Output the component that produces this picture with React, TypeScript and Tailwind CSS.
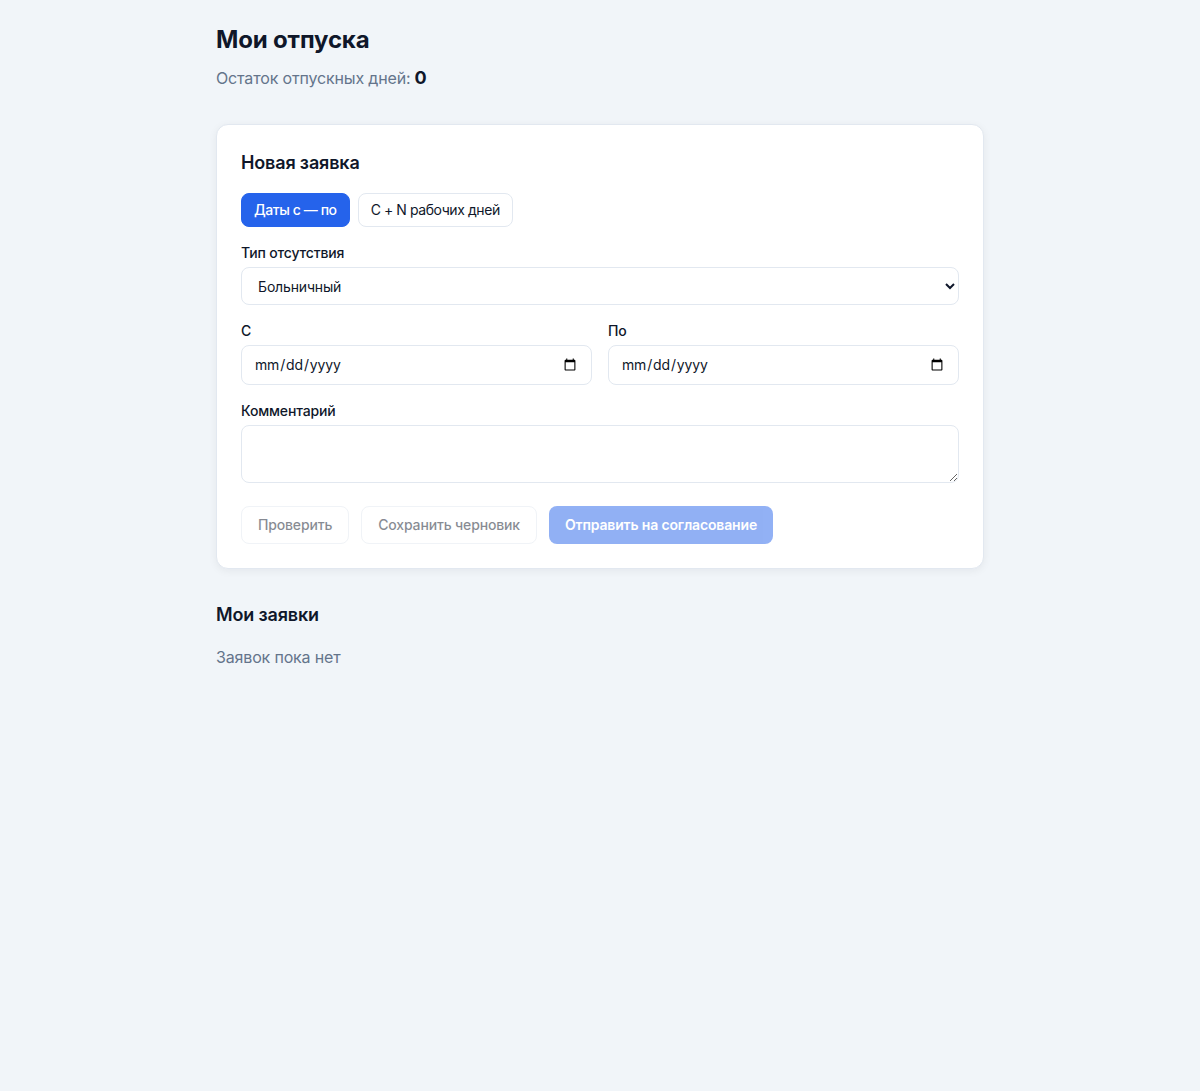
import { useState } from "react";

export default function App() {
  const [mode, setMode] = useState<"range" | "days">("range");

  return (
    <div className="min-h-screen bg-[#f1f5f9] font-['Inter',sans-serif] tracking-[-0.01em] text-[#0f172a]">
      <div className="mx-auto max-w-3xl py-6">
        <h1 className="text-2xl font-bold">Мои отпуска</h1>
        <p className="mt-2 flex items-baseline gap-1 text-base text-[#64748b]">
          Остаток отпускных дней:
          <span className="text-lg font-bold text-[#0f172a]">0</span>
        </p>

        <div className="mt-8 rounded-xl border border-[#e2e8f0] bg-white p-6 shadow-[0_2px_8px_rgba(15,23,42,0.06)]">
          <h2 className="text-lg font-semibold">Новая заявка</h2>

          <div className="mt-4 flex gap-2">
            <button
              onClick={() => setMode("range")}
              className={`h-[34px] rounded-lg border px-3 text-sm tracking-[-0.03em] ${
                mode === "range"
                  ? "border-[#2563eb] bg-[#2563eb] font-medium text-white"
                  : "border-[#e2e8f0] bg-white text-[#0f172a]"
              }`}
            >
              Даты с — по
            </button>
            <button
              onClick={() => setMode("days")}
              className={`h-[34px] rounded-lg border px-3 text-sm tracking-[-0.03em] ${
                mode === "days"
                  ? "border-[#2563eb] bg-[#2563eb] font-medium text-white"
                  : "border-[#e2e8f0] bg-white text-[#0f172a]"
              }`}
            >
              С + N рабочих дней
            </button>
          </div>

          <div className="mt-4">
            <label className="block text-sm font-medium">Тип отсутствия</label>
            <select className="mt-1 h-[38px] w-full rounded-lg border border-[#e2e8f0] bg-white px-3 text-sm">
              <option>Больничный</option>
              <option>Ежегодный отпуск</option>
              <option>Без сохранения зарплаты</option>
            </select>
          </div>

          <div className="mt-4 grid grid-cols-2 gap-4">
            <div>
              <label className="block text-sm font-medium">С</label>
              <input
                type="date"
                className="mt-1 h-10 w-full rounded-lg border border-[#e2e8f0] bg-white px-3 text-sm"
              />
            </div>
            <div>
              <label className="block text-sm font-medium">По</label>
              <input
                type="date"
                className="mt-1 h-10 w-full rounded-lg border border-[#e2e8f0] bg-white px-3 text-sm"
              />
            </div>
          </div>

          <div className="mt-4">
            <label className="block text-sm font-medium">Комментарий</label>
            <textarea className="mt-1 block h-[58px] w-full rounded-lg border border-[#e2e8f0] bg-white px-3 py-2 text-sm" />
          </div>

          <div className="mt-[23px] flex gap-3">
            <button
              disabled
              className="h-[38px] rounded-lg border border-[#e2e8f0] bg-white px-4 text-sm font-medium text-[#0f172a] opacity-50"
            >
              Проверить
            </button>
            <button
              disabled
              className="h-[38px] rounded-lg border border-[#e2e8f0] bg-white px-4 text-sm font-medium text-[#0f172a] opacity-50"
            >
              Сохранить черновик
            </button>
            <button
              disabled
              className="h-[38px] rounded-lg bg-[#2563eb] px-4 text-sm font-semibold text-white opacity-50"
            >
              Отправить на согласование
            </button>
          </div>
        </div>

        <h2 className="mt-8 text-lg font-semibold">Мои заявки</h2>
        <p className="mt-4 text-base text-[#64748b]">Заявок пока нет</p>
      </div>
    </div>
  );
}
